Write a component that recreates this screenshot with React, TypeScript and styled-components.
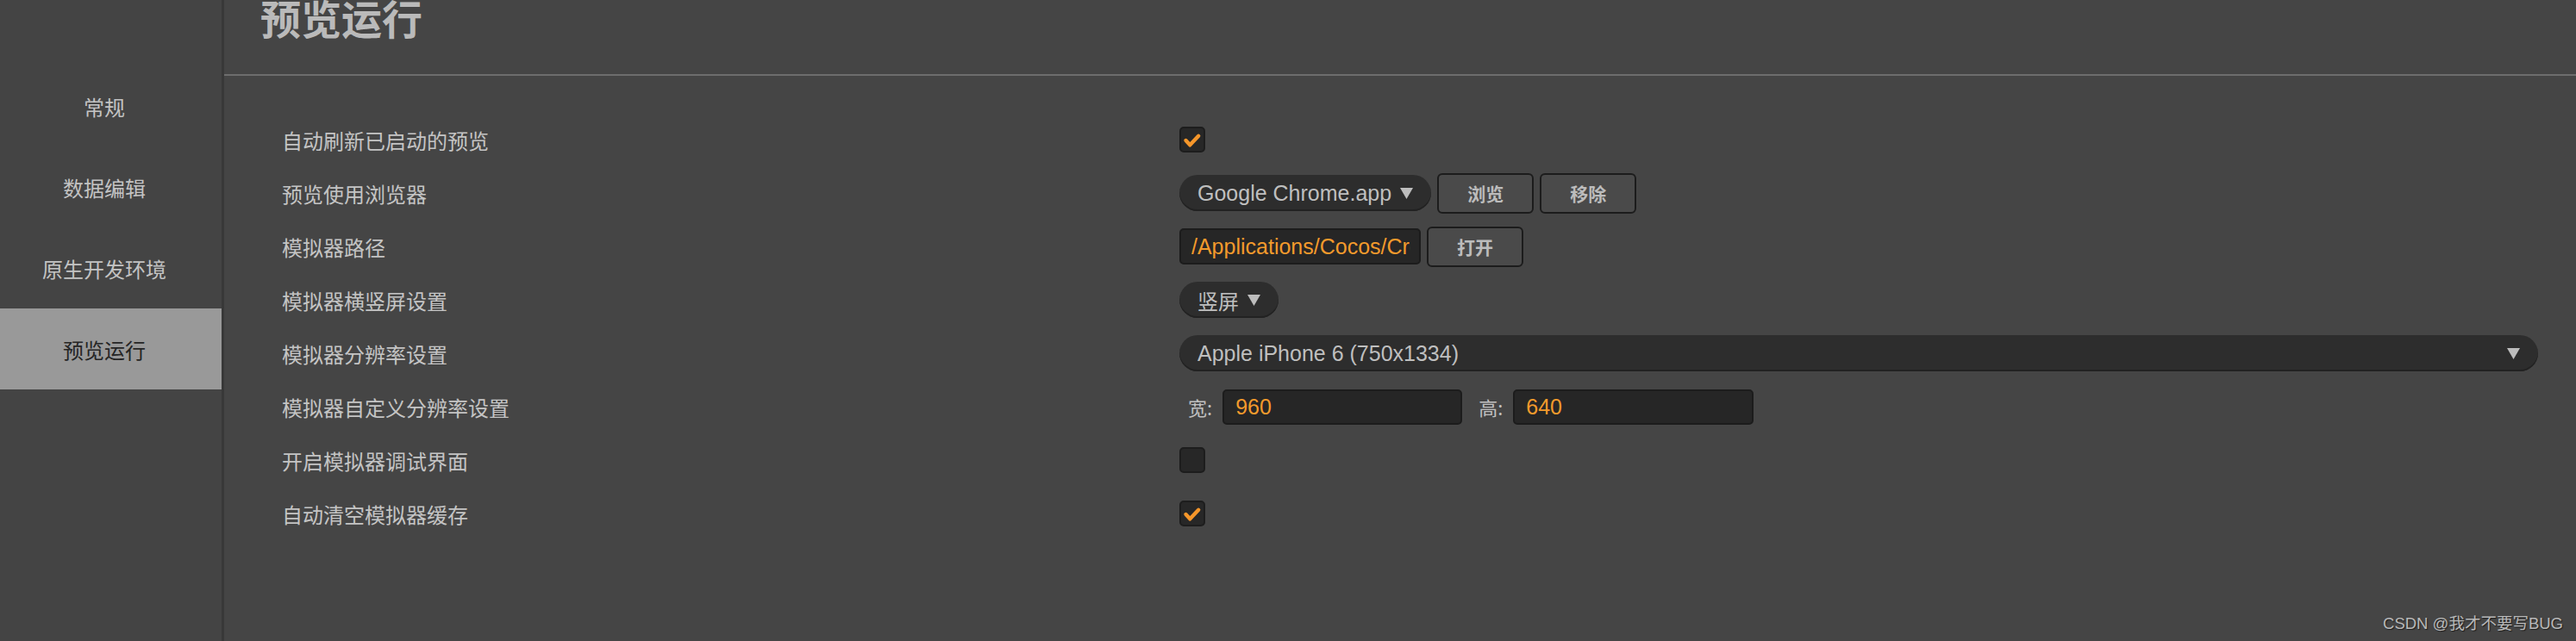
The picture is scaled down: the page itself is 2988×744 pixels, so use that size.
import React from "react";
import styled, { createGlobalStyle } from "styled-components";

const GlobalStyle = createGlobalStyle`
  html, body {
    margin: 0;
    padding: 0;
    background: #454545;
  }
  body {
    font-family: "Liberation Sans", "Noto Sans CJK SC", sans-serif;
    overflow: hidden;
  }
  #root {
    height: 744px;
  }
`;

const Shell = styled.div`
  position: relative;
  display: flex;
  width: 2988px;
  height: 744px;
  background: #454545;
  overflow: hidden;
`;

const Sidebar = styled.nav`
  flex: none;
  width: 257px;
  padding-top: 76px;
  background: #444444;
  border-right: 3px solid #383838;
  display: flex;
  flex-direction: column;
`;

const NavItem = styled.div<{ $active?: boolean }>`
  height: 94px;
  padding-right: 15px;
  display: flex;
  align-items: center;
  justify-content: center;
  font-family: "Noto Sans CJK SC", sans-serif;
  font-size: 24px;
  color: ${(p) => (p.$active ? "#252525" : "#c3c3c3")};
  background: ${(p) => (p.$active ? "#999999" : "transparent")};
`;

const Main = styled.main`
  flex: 1;
  min-width: 0;
  display: flex;
  flex-direction: column;
`;

const Header = styled.header`
  height: 86px;
  padding-left: 42px;
  border-bottom: 2px solid #6d6d6d;
  overflow: hidden;
`;

const Title = styled.h1`
  margin: -4px 0 0;
  font-family: "Noto Sans CJK SC", sans-serif;
  font-size: 47px;
  line-height: 47px;
  font-weight: 700;
  color: #bababa;
`;

const Settings = styled.section`
  display: grid;
  grid-template-columns: 1041px 1fr;
  grid-auto-rows: 62px;
  align-items: center;
  padding: 43px 44px 0 67px;
`;

const Label = styled.div`
  font-family: "Noto Sans CJK SC", sans-serif;
  font-size: 24px;
  color: #c4c4c4;
  white-space: nowrap;
`;

const Control = styled.div`
  display: flex;
  align-items: center;
  gap: 7px;
  min-width: 0;
`;

const CheckBox = styled.div`
  width: 30px;
  height: 30px;
  box-sizing: border-box;
  border: 2px solid #1d1d1d;
  border-radius: 5px;
  background: #272727;
  display: flex;
  align-items: center;
  justify-content: center;
`;

const Select = styled.div<{ $stretch?: boolean }>`
  height: 42px;
  box-sizing: border-box;
  padding: 0 21px;
  border-radius: 21px;
  background: #2d2d2d;
  box-shadow: inset 0 -2px 0 #222222;
  display: flex;
  align-items: center;
  justify-content: ${(p) => (p.$stretch ? "space-between" : "flex-start")};
  gap: 10px;
  flex: ${(p) => (p.$stretch ? "1" : "none")};
  font-size: 25px;
  color: #bfbfbf;
  white-space: nowrap;
`;

const SelectCjk = styled.span`
  font-family: "Noto Sans CJK SC", sans-serif;
  font-size: 24px;
`;

const Button = styled.button`
  width: 112px;
  height: 47px;
  box-sizing: border-box;
  padding: 0;
  border: 2px solid #1c1c1c;
  border-radius: 6px;
  background: #4a4a4a;
  color: #bcbcbc;
  font-family: "Noto Sans CJK SC", sans-serif;
  font-size: 21px;
  font-weight: 700;
`;

const TextField = styled.input<{ $width: number; $height: number; $pad: number }>`
  width: ${(p) => p.$width}px;
  height: ${(p) => p.$height}px;
  box-sizing: border-box;
  padding: 0 10px 0 ${(p) => p.$pad}px;
  border: 2px solid #1c1c1c;
  border-radius: 5px;
  background: #262626;
  color: #f39a2c;
  font-family: "Liberation Sans", sans-serif;
  font-size: 25px;
  outline: none;
`;

const DimLabel = styled.span<{ $lead: number }>`
  margin-left: ${(p) => p.$lead}px;
  margin-right: 5px;
  font-family: "Noto Sans CJK SC", sans-serif;
  font-size: 22px;
  color: #c0c0c0;
  white-space: nowrap;
`;

const Watermark = styled.div`
  position: absolute;
  right: 15px;
  bottom: 9px;
  font-family: "Liberation Sans", "Noto Sans CJK SC", sans-serif;
  font-size: 18.5px;
  color: #b9b9b9;
  text-shadow: 1px 1px 1px #1e1e1e;
  white-space: nowrap;
`;

const Arrow = () => (
  <svg width="15" height="13" viewBox="0 0 15 13">
    <polygon points="0,0 15,0 7.5,13" fill="#bdbdbd" />
  </svg>
);

const Check = ({ on }: { on: boolean }) => (
  <CheckBox>
    {on && (
      <svg width="26" height="26" viewBox="0 0 26 26">
        <polyline
          points="5.5,14 10.3,19.3 20.2,8.8"
          fill="none"
          stroke="#f5962a"
          strokeWidth="4.4"
          strokeLinecap="round"
          strokeLinejoin="round"
        />
      </svg>
    )}
  </CheckBox>
);

const navItems = ["常规", "数据编辑", "原生开发环境", "预览运行"];

export default function App() {
  return (
    <>
      <GlobalStyle />
      <Shell>
        <Sidebar>
          {navItems.map((n) => (
            <NavItem key={n} $active={n === "预览运行"}>
              {n}
            </NavItem>
          ))}
        </Sidebar>
        <Main>
          <Header>
            <Title>预览运行</Title>
          </Header>
          <Settings>
            <Label>自动刷新已启动的预览</Label>
            <Control>
              <Check on />
            </Control>

            <Label>预览使用浏览器</Label>
            <Control>
              <Select>
                <span>Google Chrome.app</span>
                <Arrow />
              </Select>
              <Button>浏览</Button>
              <Button>移除</Button>
            </Control>

            <Label>模拟器路径</Label>
            <Control>
              <TextField
                $width={280}
                $height={42}
                $pad={12}
                readOnly
                value="/Applications/Cocos/Creator/2.4.3/CocosCreator.app/Contents/Resources/cocos2d-x/simulator/mac/Simulator.app"
              />
              <Button>打开</Button>
            </Control>

            <Label>模拟器横竖屏设置</Label>
            <Control>
              <Select>
                <SelectCjk>竖屏</SelectCjk>
                <Arrow />
              </Select>
            </Control>

            <Label>模拟器分辨率设置</Label>
            <Control>
              <Select $stretch>
                <span>Apple iPhone 6 (750x1334)</span>
                <Arrow />
              </Select>
            </Control>

            <Label>模拟器自定义分辨率设置</Label>
            <Control>
              <DimLabel $lead={10}>宽:</DimLabel>
              <TextField $width={278} $height={41} $pad={13} readOnly value="960" />
              <DimLabel $lead={12}>高:</DimLabel>
              <TextField $width={279} $height={41} $pad={13} readOnly value="640" />
            </Control>

            <Label>开启模拟器调试界面</Label>
            <Control>
              <Check on={false} />
            </Control>

            <Label>自动清空模拟器缓存</Label>
            <Control>
              <Check on />
            </Control>
          </Settings>
        </Main>
        <Watermark>CSDN @我才不要写BUG</Watermark>
      </Shell>
    </>
  );
}
